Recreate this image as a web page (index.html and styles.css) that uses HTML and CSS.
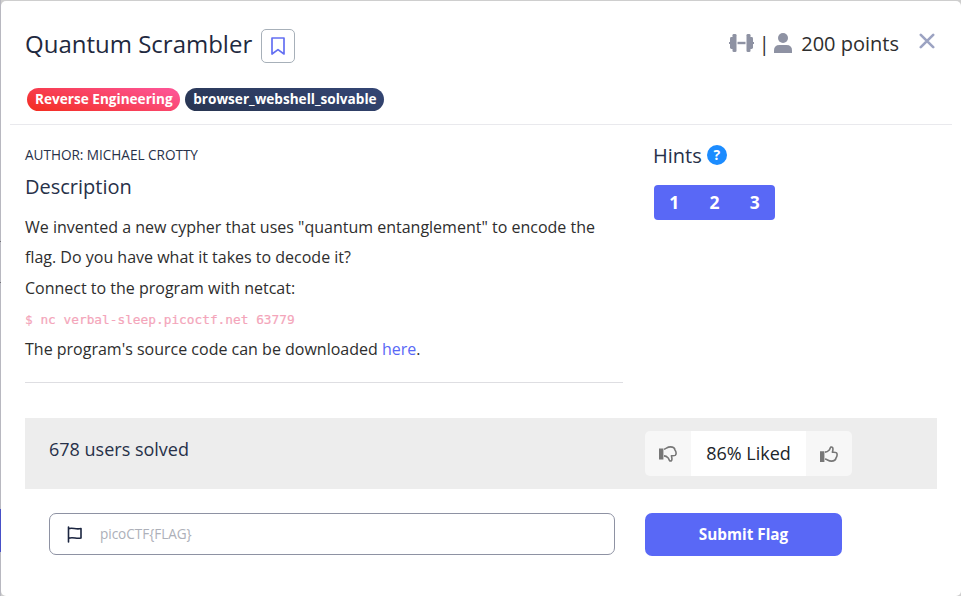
FILE: index.html
```html
<!DOCTYPE html>
<html lang="en">
<head>
<meta charset="utf-8">
<title>Quantum Scrambler</title>
<link rel="stylesheet" href="styles.css">
</head>
<body>
<main class="modal">
  <header class="modal-header">
    <div class="heading">
      <div class="title-row">
        <h1>Quantum Scrambler</h1>
        <button class="bookmark" aria-label="Bookmark"><svg width="16" height="20" viewBox="0 0 16 20"><path d="M2 2H14V18L8 13.6L2 18Z" fill="none" stroke="#6470f2" stroke-width="1.7" stroke-linejoin="round"/></svg></button>
      </div>
      <div class="tags"><span class="tag red">Reverse Engineering</span><span class="tag navy">browser_webshell_solvable</span></div>
    </div>
    <div class="score">
      <svg class="dumbbell" width="25" height="20" viewBox="0 0 25 20" fill="#8e92a3"><rect x="3.500" y="1" width="4" height="18" rx="1.3"/><rect x="17.500" y="1" width="4" height="18" rx="1.3"/><rect x="1" y="4" width="5" height="12" rx="1.4"/><rect x="19" y="4" width="5" height="12" rx="1.4"/><rect x="0" y="9" width="2" height="2"/><rect x="23" y="9" width="2" height="2"/><rect x="8.500" y="8.800" width="8" height="2.400"/></svg>
      <span class="bar">|</span>
      <svg class="person" width="18" height="20" viewBox="0 0 18 20" fill="#8e92a3"><circle cx="9" cy="5" r="5"/><path d="M0 20V17.500Q0 12 5.500 12H12.500Q18 12 18 17.500V20Z"/></svg>
      <span class="points">200 points</span>
      <button class="close" aria-label="Close"><svg width="16" height="16" viewBox="0 0 16 16"><path d="M1.800 1.800L14.200 14.200M14.200 1.800L1.800 14.200" stroke="#9ca3c2" stroke-width="2.600" stroke-linecap="round"/></svg></button>
    </div>
  </header>
  <div class="details">
    <section class="description">
      <p class="author">AUTHOR: MICHAEL CROTTY</p>
      <h2>Description</h2>
      <div class="copy">
        <p>We invented a new cypher that uses "quantum entanglement" to encode the<br>flag. Do you have what it takes to decode it?</p>
        <p>Connect to the program with netcat:</p>
        <p class="command"><code>$ nc verbal-sleep.picoctf.net 63779</code></p>
        <p>The program's source code can be downloaded <a>here</a>.</p>
      </div>
    </section>
    <aside class="hints">
      <div class="hint-title"><h2>Hints</h2><span class="help">?</span></div>
      <div class="hint-buttons"><button>1</button><button>2</button><button>3</button></div>
    </aside>
  </div>
  <section class="solved">
    <p>678 users solved</p>
    <div class="rating">
      <button class="vote" aria-label="Dislike"><svg width="18" height="16" viewBox="0 0 18 16"><path d="M0 2.500H4.400V13.500H0Z" fill="#777"/><path d="M5 3.200C7.500 2.700 8 .9 11.500 .9C14 .9 15.500 1.300 16 4C17.300 5.800 17.600 8.500 16.200 9.400C15 10 13.500 9.700 12.400 9.900C12.900 11.700 13.300 12.700 12.700 14.200Q12 15.300 10.800 14.900C9.900 14.200 9.900 12.600 9 11.700C7.800 10.500 7 10 5 9.900" fill="none" stroke="#777" stroke-width="1.600" stroke-linejoin="round"/></svg></button>
      <span>86% Liked</span>
      <button class="vote" aria-label="Like"><svg width="18" height="16" viewBox="0 0 18 16"><path d="M0 5.300H4.400V16H0Z" fill="#777"/><path d="M5 13C7.500 13.300 8 15.100 11.500 15.100C14 15.100 15.500 14.700 16 12C17.300 10.200 17.600 7.500 16.200 6.600C15 6 13.500 6.300 12.400 6.100C12.900 4.300 13.300 3.300 12.700 1.800Q12 .7 10.800 1.100C9.900 1.800 9.900 3.400 9 4.300C7.800 5.500 7 6 5 6.100" fill="none" stroke="#777" stroke-width="1.600" stroke-linejoin="round"/></svg></button>
    </div>
  </section>
  <form class="submission">
    <label class="flag-field"><svg width="16" height="17" viewBox="0 0 16 17"><path d="M1.500 1V16M1.500 2.800C5 1 9 4 14 2.500V12C9.500 13.300 6 10.500 1.500 12.300" fill="none" stroke="#1b2540" stroke-width="1.600" stroke-linecap="round" stroke-linejoin="round"/></svg><input type="text" placeholder="picoCTF{FLAG}"></label>
    <button type="button" class="submit">Submit Flag</button>
  </form>
</main>
</body>
</html>
```
FILE: styles.css
```css
* { box-sizing: border-box; }
body {
  margin: 0;
  height: 596px;
  overflow: hidden;
  padding: 1px 0 0 1px;
  background: linear-gradient(#4750c8, #4750c8) 0 509px / 1px 43px no-repeat, linear-gradient(#74747b, #74747b) 0 241px / 1px 1px no-repeat, linear-gradient(#74747b, #74747b) 0 282px / 1px 1px no-repeat, linear-gradient(90deg, #b8b8c0 1px, #cecece 1px);
  font: 16px/30px "Open Sans", sans-serif;
  color: #2e2e2e;
}
h1, h2, p { margin: 0; font-weight: 400; }
button { border: 0; padding: 0; background: none; font: inherit; }
svg { display: block; flex: none; }
.modal { height: 595px; border-radius: 5px; background: #fff; padding: 0 9px 0 9px; }
.modal-header {
  height: 124px;
  padding: 28px 17px 0 15px;
  display: flex;
  justify-content: space-between;
  border-bottom: 1px solid #e9e9ed;
}
.title-row { display: flex; gap: 9px; height: 34px; }
h1 { font-size: 24px; line-height: 30px; color: #1f2940; }
.bookmark {
  width: 34px;
  height: 34px;
  border: 1px solid #a7b0b9;
  border-radius: 5px;
  display: grid;
  place-items: center;
}
.tags { display: flex; gap: 5px; padding: 25px 0 0 2px; }
.tag {
  height: 23px;
  padding: 0 7.700px 0 8px;
  border-radius: 12px;
  font-size: 13.600px;
  line-height: 22px;
  font-weight: 700;
  color: #fff;
}
.red { background: linear-gradient(15deg, #f32c1e, #fd5391 90%); }
.navy { background: linear-gradient(15deg, #283551, #344675); }
.score { display: flex; height: 30px; font-size: 20px; }
.dumbbell { margin-top: 4px; }
.bar { width: 20px; text-align: center; }
.person { margin-top: 4px; }
.points { margin-left: 9px; }
.close { margin: 4px 0 0 20px; height: 16px; }
.details { display: flex; justify-content: space-between; padding: 15px 0 0 15px; }
.description { width: 598px; height: 243px; border-bottom: 1px solid #dedee2; }
.author { font-size: 13.600px; line-height: 30px; letter-spacing: -.03px; color: #273149; }
h2 { font-size: 20px; line-height: 30px; color: #273149; }
.description h2 { height: 42px; line-height: 34px; }
.copy { line-height: 30.400px; }
.command { height: 30.500px; color: #f4a5ba; }
.command code { display: block; font: 12.800px/33px "DejaVu Sans Mono", monospace; -webkit-text-stroke: .2px; }
a { color: #5968f6; }
.hints { width: 299px; }
.hint-title { display: flex; gap: 5px; align-items: center; height: 32px; }
.help {
  width: 20px;
  height: 20px;
  margin-bottom: 2px;
  border-radius: 50%;
  background: #1c8cff;
  color: #fff;
  text-align: center;
  font-size: 14px;
  line-height: 20px;
  font-weight: 700;
}
.hint-buttons {
  margin: 13px 0 0 1px;
  display: grid;
  grid-template-columns: repeat(3, 1fr);
  width: 121px;
  height: 35px;
  border-radius: 4px;
  overflow: hidden;
  background: #5968f6;
}
.hint-buttons button { color: #fff; font-size: 17.500px; font-weight: 700; padding-bottom: 2px; }
.solved {
  display: grid;
  grid-template-columns: 596px 207px;
  margin: 35px 15px 0 15px;
  padding-left: 24px;
  height: 71px;
  background: #ededed;
  font-size: 18px;
}
.solved p { color: #273149; padding-top: 16px; }
.rating { display: grid; grid-template-columns: 46px 115px 46px; height: 45px; margin-top: 13px; border-radius: 5px; overflow: hidden; }
.rating span { background: #fff; line-height: 45px; text-align: center; color: #212529; }
.vote { background: #f7f7f7; display: grid; place-items: center; }
.submission { display: flex; gap: 30px; padding: 24px 0 0 39px; }
.flag-field { width: 566px; height: 42px; border: 1px solid #8e92a3; border-radius: 7px; padding-left: 17px; display: flex; align-items: center; gap: 17px; }
.flag-field input { width: 480px; padding: 0; border: 0; outline: 0; background: none; font: 13.600px/24px "Open Sans", sans-serif; letter-spacing: -.05px; }
.flag-field input::placeholder { color: #adb0b9; opacity: 1; }
.submit { width: 197px; height: 43px; border-radius: 7px; background: #5968f6; color: #fff; font-size: 15.300px; font-weight: 700; padding-bottom: 1px; }
```
